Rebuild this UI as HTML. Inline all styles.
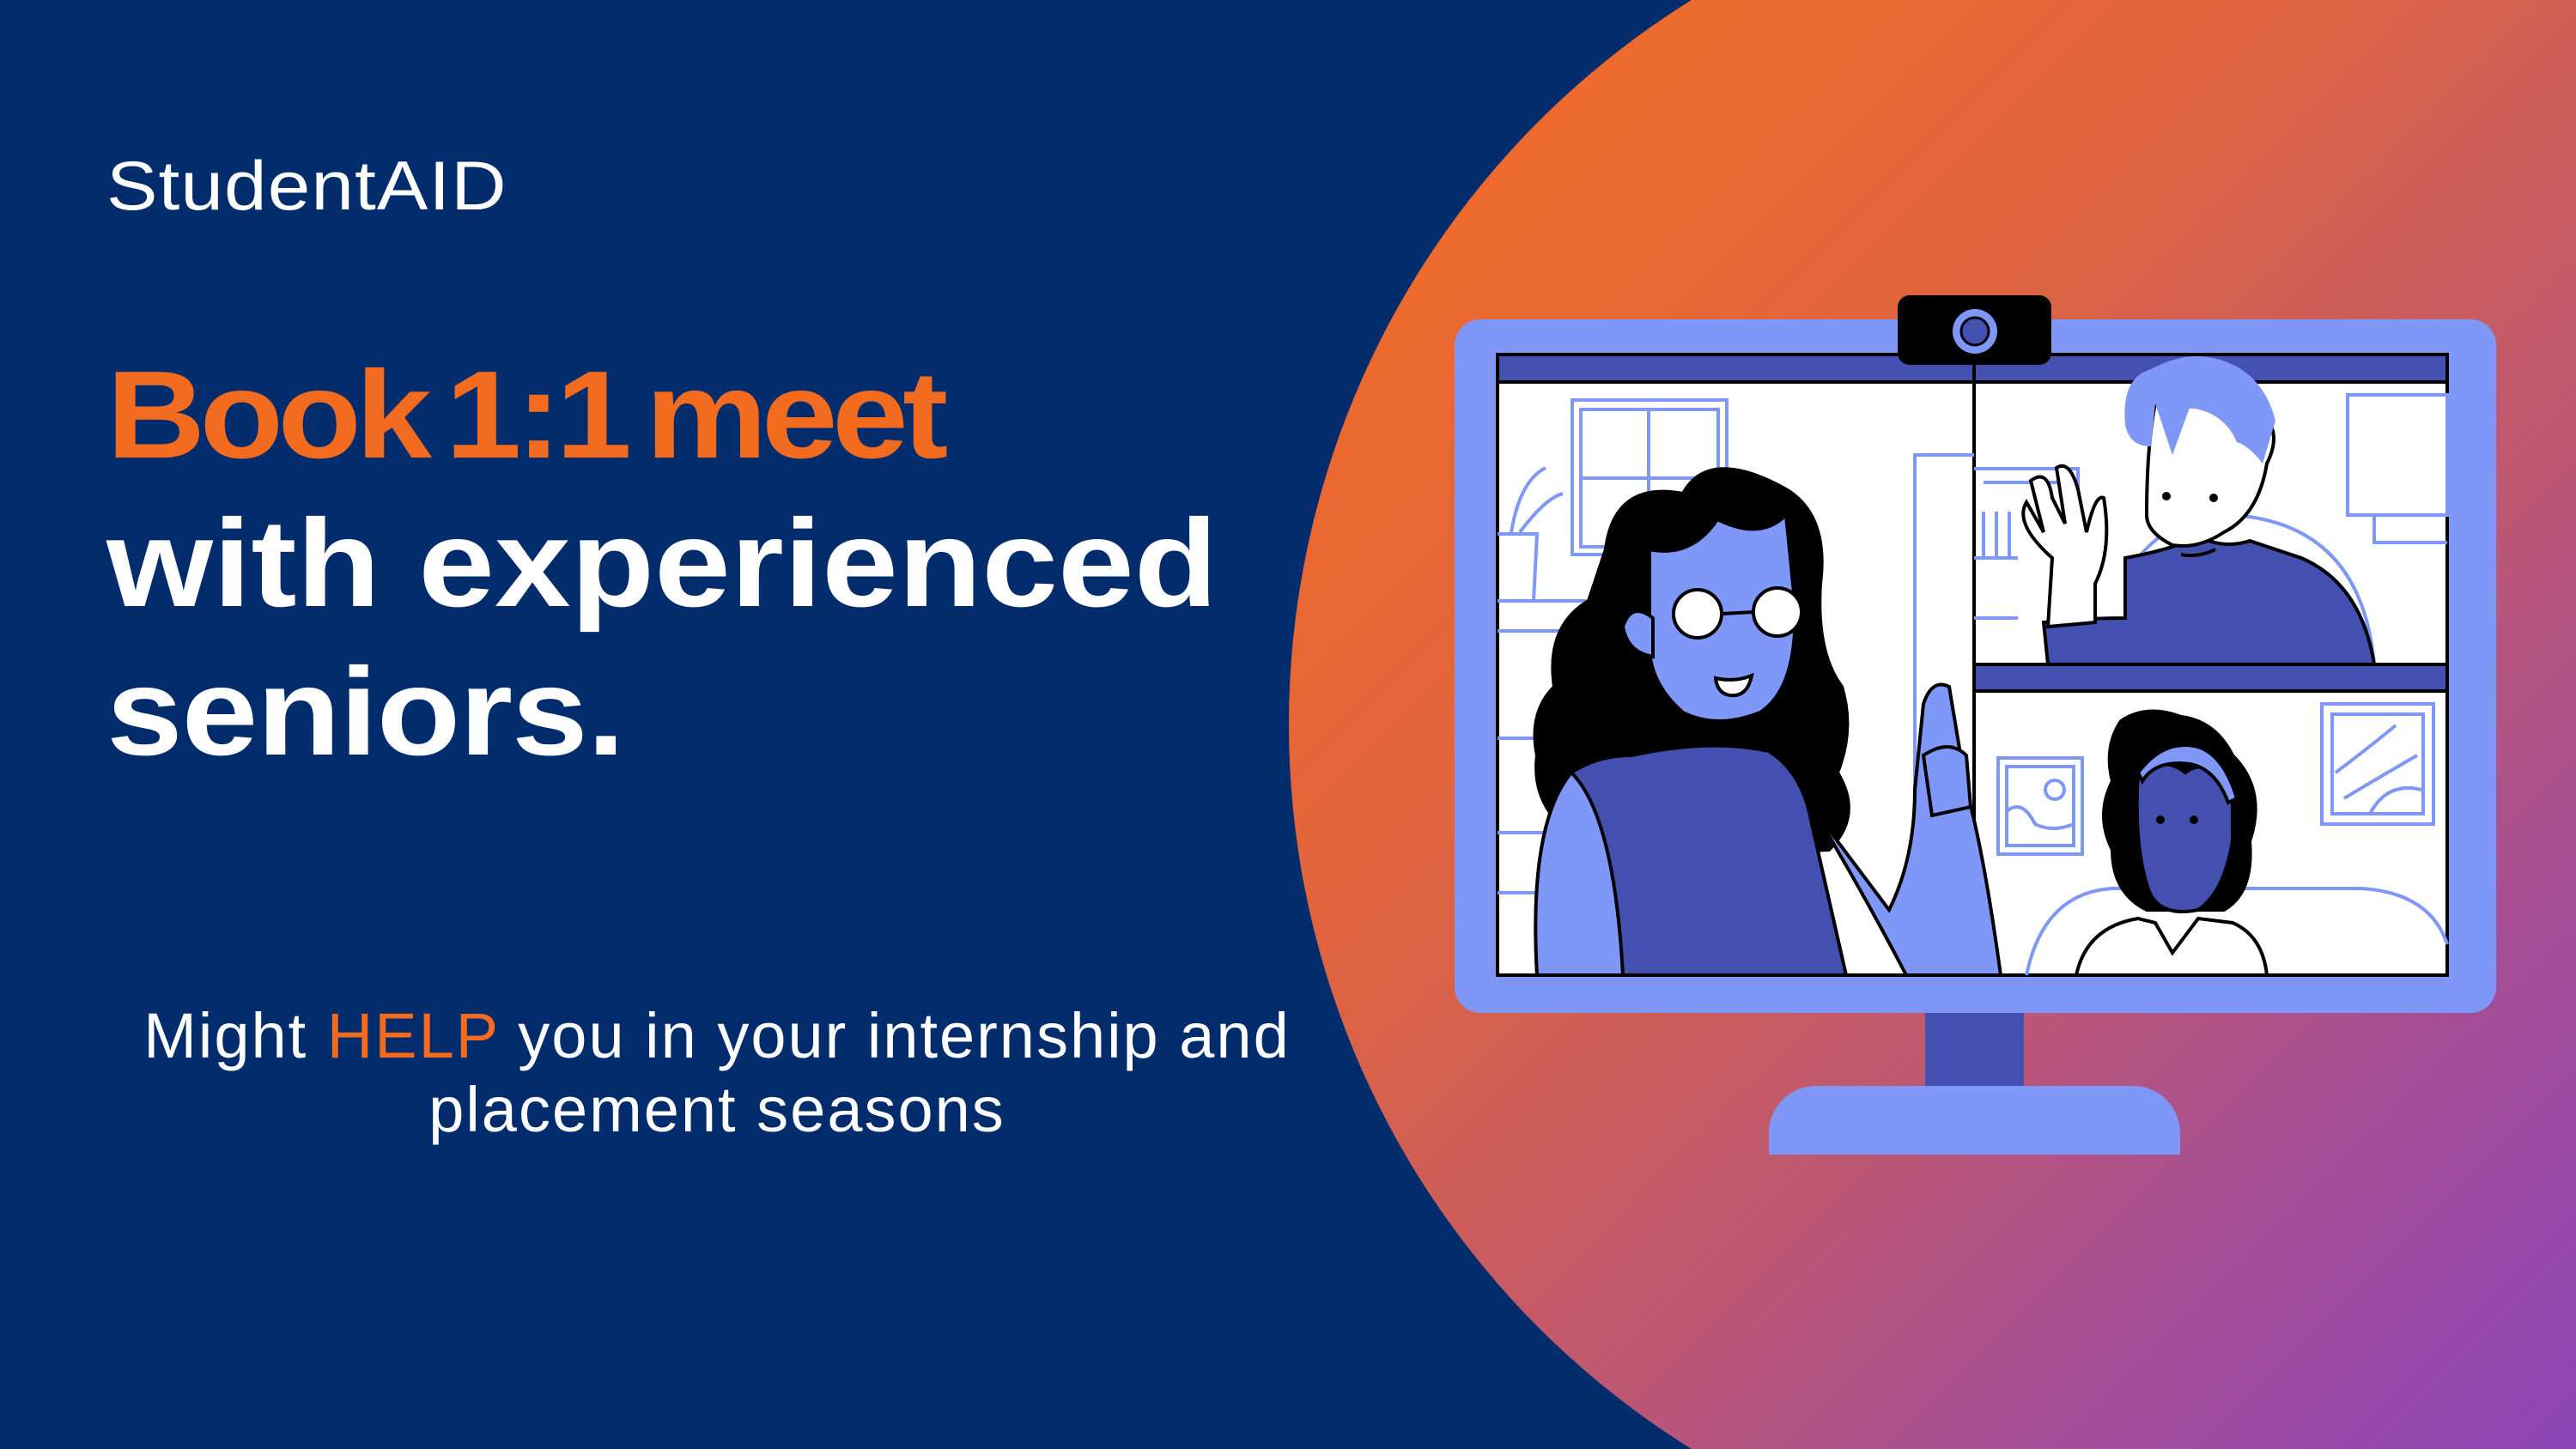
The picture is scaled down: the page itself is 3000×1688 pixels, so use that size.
<!DOCTYPE html>
<html><head><meta charset="utf-8"><style>
html,body{margin:0;padding:0;width:3000px;height:1688px;overflow:hidden}
body{position:relative;background:#022c6c;font-family:"Liberation Sans",sans-serif}
#wrap{position:absolute;left:0;top:0;width:3000px;height:1688px;overflow:hidden}
.t{position:absolute;color:#fff;white-space:nowrap}
</style></head><body><div id="wrap">
<svg style="position:absolute;left:0;top:0" width="3000" height="1688" viewBox="0 0 3000 1688">
<defs><linearGradient id="g" gradientUnits="userSpaceOnUse" x1="1790" y1="140" x2="3200" y2="1550">
<stop offset="0" stop-color="#ee6a2c"/><stop offset="0.25" stop-color="#e0643e"/><stop offset="0.5" stop-color="#c45a68"/><stop offset="0.72" stop-color="#a84f92"/><stop offset="1" stop-color="#8a44bb"/></linearGradient></defs>
<circle cx="2495" cy="844" r="994" fill="url(#g)"/>
</svg>
<div class="t" style="left:124px;top:167px;font-size:81px;line-height:100px;letter-spacing:1px;transform:scaleX(1.1);transform-origin:0 0">StudentAID</div>
<div class="t" style="left:124px;top:397px;font-size:145px;font-weight:bold;line-height:173px;letter-spacing:0;transform:scaleX(1.1);transform-origin:0 0"><span style="color:#f26b1f;letter-spacing:-6px;word-spacing:-14px">Book 1:1 meet</span><br>with experienced<br><span style="letter-spacing:-1px">seniors.</span></div>
<div class="t" style="left:0;width:1670px;top:1164px;font-size:74px;line-height:86px;text-align:center;letter-spacing:2px">Might <span style="color:#f26b1f">HELP</span> you in your internship and<br>placement seasons</div>

<svg style="position:absolute;left:0;top:0" width="3000" height="1688" viewBox="0 0 3000 1688">
<rect x="2242" y="1170" width="115" height="100" fill="#4450b0"/>
<path d="M2060 1345 V1320 a55 55 0 0 1 55 -55 H2484 a55 55 0 0 1 55 55 V1345 Z" fill="#7f98f7"/>
<rect x="1694" y="372" width="1213" height="808" rx="30" fill="#7f98f7"/>
<rect x="1744" y="413" width="1106" height="723" fill="#fff" stroke="#000" stroke-width="4"/>
<rect x="1744" y="413" width="1106" height="32" fill="#4450b0" stroke="#000" stroke-width="4"/>
<line x1="2299" y1="413" x2="2299" y2="1136" stroke="#000" stroke-width="4"/>
<rect x="2299" y="774" width="551" height="31" fill="#4450b0" stroke="#000" stroke-width="4"/>
<g fill="none" stroke="#7f98f7" stroke-width="4">
<rect x="1831" y="466" width="180" height="180"/><rect x="1841" y="477" width="160" height="160"/>
<line x1="1920" y1="477" x2="1920" y2="637"/><line x1="1841" y1="557" x2="2001" y2="557"/>
<path d="M2299 530 H2230 V1000 H2299"/>
<path d="M1744 700 H2000 M1744 735 H2000 M1744 860 H2000 M1744 1040 H2000 M1744 970 H2000"/>
<path d="M1744 622 H1790 L1786 700 M1760 620 Q1770 560 1800 545 M1770 620 Q1800 580 1820 575"/>
<path d="M2299 546 H2420 V774 M2310 562 H2405 V774 M2299 650 H2350 M2299 720 H2350 M2310 596 V650 M2325 596 V650 M2340 596 V650"/>
<rect x="2734" y="460" width="116" height="140"/><path d="M2765 600 V632 H2850"/>
<path d="M2490 650 Q2530 600 2600 600 Q2750 610 2765 774"/>
<rect x="2327" y="883" width="98" height="112"/><rect x="2337" y="893" width="78" height="92"/>
<path d="M2337 945 Q2355 930 2370 960 Q2390 970 2415 960"/><circle cx="2393" cy="920" r="11"/>
<rect x="2704" y="820" width="130" height="140"/><rect x="2716" y="832" width="106" height="116"/>
<path d="M2720 900 Q2760 870 2790 845 M2730 930 Q2780 900 2815 880 M2760 948 Q2780 910 2820 920"/>
<path d="M2360 1136 Q2380 1040 2460 1035 H2750 Q2830 1040 2850 1100"/>
</g>
<g stroke="#000" stroke-width="4">
<path d="M1870 640 Q1880 560 1960 575 Q1990 520 2080 570 Q2130 600 2120 680 Q2115 760 2145 800 Q2160 850 2140 900 Q2170 950 2130 990 L1880 1000 Q1780 960 1790 880 Q1780 830 1810 800 Q1800 730 1850 700 Z" fill="#000"/>
<path d="M1921 640 Q1970 650 2000 605 Q2050 630 2080 600 L2090 700 Q2095 800 2050 830 Q2000 850 1960 830 Q1925 800 1921 760 Z" fill="#7f98f7"/>
<path d="M1925 720 Q1900 700 1890 730 Q1895 760 1925 765 Z" fill="#7f98f7"/>
<circle cx="1977" cy="715" r="28" fill="#fff"/><circle cx="2070" cy="713" r="28" fill="#fff"/>
<path d="M2005 715 L2042 713" fill="none"/>
<path d="M1998 790 Q2020 795 2040 787 Q2035 812 2015 810 Q2000 808 1998 790Z" fill="#fff"/>
<path d="M1900 880 Q1990 860 2060 875 Q2100 900 2110 960 L2150 1136 H1790 Q1780 960 1830 900 Q1860 880 1900 880Z" fill="#4450b0"/>
<path d="M1830 900 Q1780 960 1790 1136 H1890 Q1880 950 1830 900Z" fill="#7f98f7"/>
<path d="M2110 940 Q2170 1040 2220 1136 H2330 Q2310 990 2290 920 L2270 800 Q2250 790 2240 820 L2230 920 Q2230 1000 2200 1060 Z" fill="#7f98f7"/>
<path d="M2240 880 Q2270 860 2290 880 L2295 940 L2250 950 Z" fill="#7f98f7"/>
<line x1="1898" y1="855" x2="2050" y2="855"/>
</g>
<g stroke="#000" stroke-width="4">
<path d="M2475 650 Q2530 640 2560 625 Q2590 640 2620 630 L2680 650 Q2750 680 2765 774 H2385 L2380 725 Q2430 720 2475 720 Z" fill="#4450b0"/>
<path d="M2500 600 Q2500 520 2510 470 L2630 480 Q2660 500 2640 540 Q2630 600 2590 620 Q2560 640 2530 635 Q2500 620 2500 600 Z" fill="#fff"/>
<path d="M2475 495 Q2470 440 2505 430 Q2560 400 2610 430 Q2640 450 2650 490 L2635 540 Q2620 520 2605 515 Q2590 480 2550 475 L2530 530 L2510 470 L2505 520 Q2480 520 2475 495Z" fill="#7f98f7" stroke="none"/>
<path d="M2390 650 Q2345 610 2360 585 L2380 620 L2365 560 Q2385 545 2390 580 L2405 610 L2395 545 Q2410 535 2420 570 L2430 620 Q2440 575 2450 580 Q2460 640 2440 680 L2440 725 L2385 730 Z" fill="#fff"/>
<circle cx="2523" cy="578" r="3" fill="#000"/><circle cx="2578" cy="580" r="3" fill="#000"/>
<path d="M2540 646 Q2560 650 2580 640" fill="none"/>
</g>
<g stroke="#000" stroke-width="4">
<path d="M2470 840 Q2500 820 2540 835 Q2580 840 2600 880 Q2640 920 2620 980 Q2625 1040 2590 1060 L2500 1060 Q2460 1040 2460 990 Q2440 950 2460 910 Q2450 870 2470 840Z" fill="#000"/>
<path d="M2490 900 Q2520 880 2545 900 Q2570 880 2600 920 L2600 980 Q2590 1040 2560 1060 Q2510 1070 2500 1030 Q2485 980 2490 900Z" fill="#4450b0"/>
<path d="M2490 900 Q2520 860 2560 870 Q2590 880 2605 930 L2595 935 Q2580 895 2550 890 Q2510 885 2495 910Z" fill="#7f98f7"/>
<circle cx="2516" cy="955" r="3" fill="#000"/><circle cx="2555" cy="955" r="3" fill="#000"/>
<path d="M2418 1136 Q2430 1080 2490 1070 L2510 1075 L2530 1110 L2560 1070 L2600 1075 Q2635 1090 2640 1136 Z" fill="#fff"/>
</g>
<rect x="2210" y="344" width="179" height="81" rx="14" fill="#000"/>
<circle cx="2300" cy="386" r="26" fill="#7f98f7"/>
<circle cx="2300" cy="386" r="16" fill="#4450b0" stroke="#000" stroke-width="3"/>
</svg>
</div></body></html>
